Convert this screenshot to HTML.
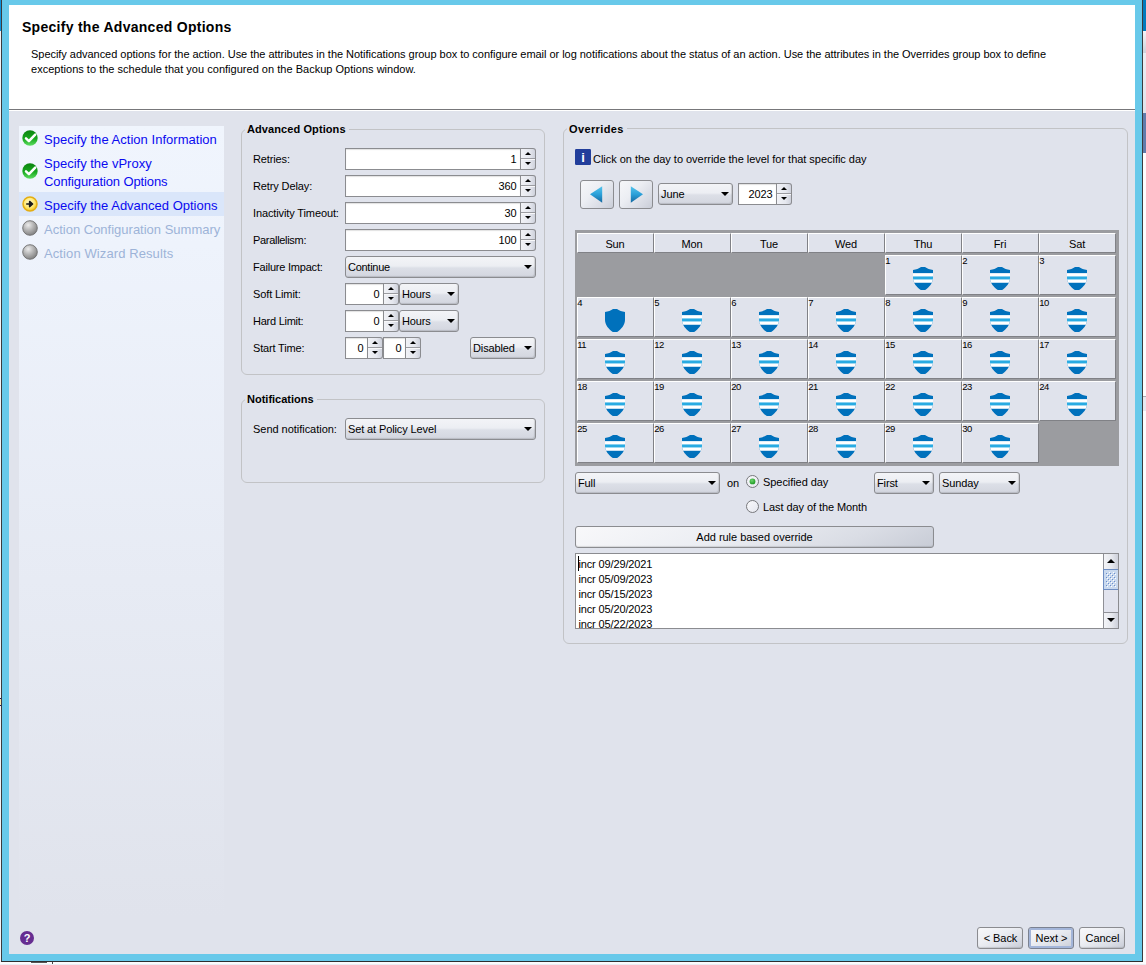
<!DOCTYPE html><html><head><meta charset="utf-8"><title>Specify the Advanced Options</title><style>
html,body{margin:0;padding:0}
body{width:1146px;height:965px;position:relative;overflow:hidden;background:#fff;font-family:"Liberation Sans",Arial,sans-serif;font-size:11px;color:#000;letter-spacing:-0.12px}
.a{position:absolute}
.t{position:absolute;white-space:nowrap;line-height:14px;height:14px}
.grp{position:absolute;border:1px solid #c2c3c6;border-radius:6px;box-sizing:border-box}
.gt{position:absolute;font-weight:bold;font-size:11px;letter-spacing:0.1px;line-height:14px;background:#e0e3ec;white-space:nowrap}
.sp{position:absolute;height:22px;box-sizing:border-box}
.sp .f{position:absolute;left:0;top:0;bottom:0;box-sizing:border-box;border:1px solid #8b8c90;background:#fff;box-shadow:inset 0 1px 1px rgba(0,0,0,.12);text-align:right;font-size:11px;line-height:20px;padding-right:3.5px}
.sp .b{position:absolute;right:0;top:0;bottom:0;width:15px;box-sizing:border-box;border:1px solid #8b8c90;border-left:none;border-radius:0 3px 3px 0;background:linear-gradient(90deg,#f1f2f6 0%,#e6e8ef 60%,#cfd2dc 100%)}
.sp .b:before{content:"";position:absolute;left:0;right:0;top:9px;height:1px;background:#9a9ba0}
.sp .b:after{content:"";position:absolute;left:0;right:0;top:10px;height:1px;background:#f8f8fa}
.up{position:absolute;left:3.5px;top:3px;width:0;height:0;border-left:3.5px solid transparent;border-right:3.5px solid transparent;border-bottom:3.5px solid #000}
.dn{position:absolute;left:3.5px;top:13px;width:0;height:0;border-left:3.5px solid transparent;border-right:3.5px solid transparent;border-top:3.5px solid #000}
.cb{position:absolute;height:22px;box-sizing:border-box;border:1px solid #8b8c90;border-radius:3px;background:linear-gradient(180deg,#f3f4f7 0%,#eceef3 45%,#dcdfe7 55%,#d3d6df 100%);box-shadow:inset -1px -1px 1px rgba(0,0,0,.13);font-size:11px;line-height:20px;padding-left:2px;white-space:nowrap}
.cb i{position:absolute;right:3px;top:8px;width:0;height:0;border-left:4px solid transparent;border-right:4px solid transparent;border-top:4px solid #000}
.btn{position:absolute;box-sizing:border-box;border:1px solid #8b8c90;border-radius:3px;background:linear-gradient(155deg,#f8f8fa 0%,#eceef3 40%,#dadde5 75%,#c8ccd6 100%);box-shadow:inset 0 -1px 1px rgba(0,0,0,.12);font-size:11px;text-align:center;white-space:nowrap}
.nb{background:linear-gradient(135deg,#f6f7f9 0%,#eceef3 40%,#d6d9e2 80%,#c9cdd7 100%);box-shadow:none}
.cell{position:absolute;box-sizing:border-box;width:77px;height:40px;background:#e0e3ec;border-top:1px solid #fff;border-left:1px solid #fff;border-right:1px solid #808186;border-bottom:1px solid #808186}
.cell b{position:absolute;left:-0.8px;top:0px;font-weight:normal;font-size:9.5px;line-height:10px;letter-spacing:-0.45px}
.cell svg{position:absolute;left:27px;top:10.9px}
.hd{position:absolute;box-sizing:border-box;width:77px;height:20px;background:#e0e3ec;border-top:1px solid #fff;border-left:1px solid #fff;border-right:1px solid #808186;border-bottom:1px solid #808186;text-align:center;font-size:11px;line-height:21px;padding-right:1px}
.nav{position:absolute;left:44px;font-size:13px;line-height:18px;letter-spacing:0;color:#0a0af0;white-space:nowrap}
.nav.d{color:#9db3d8}
</style></head><body>
<div class="a" style="left:0;top:0;width:1146px;height:962px;background:#68c9ea"></div>
<div class="a" style="left:0;top:0;width:1px;height:31px;background:#0c93dc"></div>
<div class="a" style="left:0;top:31px;width:1px;height:931px;background:#f4f4f8"></div>
<div class="a" style="left:1px;top:0;width:1px;height:962px;background:#3b3b3d"></div>
<div class="a" style="left:1142px;top:0;width:1px;height:962px;background:#3b3b3d"></div>
<div class="a" style="left:1143px;top:0;width:3px;height:31px;background:#007bbd"></div>
<div class="a" style="left:1143px;top:31px;width:3px;height:931px;background:#fdfdfe"></div>
<div class="a" style="left:1143px;top:31px;width:3px;height:22px;background:linear-gradient(180deg,#f4f4f8,#cfd2db)"></div>
<div class="a" style="left:1143px;top:53px;width:3px;height:60px;background:linear-gradient(180deg,#eceef4,#dfe2ea)"></div>
<div class="a" style="left:1143px;top:113px;width:3px;height:40px;background:#5f7cab"></div>
<div class="a" style="left:1143px;top:396px;width:3px;height:14px;background:#e6e8f0;border-top:1px solid #a9abb3"></div>
<div class="a" style="left:1px;top:961px;width:1142px;height:1px;background:#2e2e30"></div>
<div class="a" style="left:0;top:962px;width:1146px;height:3px;background:#fbfbfd"></div>
<div class="a" style="left:31px;top:962px;width:16px;height:1px;background:#555"></div>
<div class="a" style="left:52px;top:962px;width:1px;height:2px;background:#444"></div>
<div class="a" style="left:0;top:964px;width:1146px;height:1px;background:#ececf2"></div>
<div class="a" style="left:0;top:698px;width:1px;height:1px;background:#1a1a6a"></div>
<div class="a" style="left:0;top:699px;width:1px;height:6px;background:#fde9b0"></div>
<div class="a" style="left:0;top:705px;width:1px;height:1px;background:#1a1a6a"></div>
<div class="a" style="left:9px;top:5px;width:1126px;height:104px;background:#fff"></div>
<div class="a" style="left:9px;top:109px;width:1126px;height:1px;background:#77777a"></div>
<div class="a" style="left:9px;top:110px;width:1126px;height:1px;background:#fff"></div>
<div class="a" style="left:9px;top:111px;width:1126px;height:843px;background:#e0e3ec"></div>
<div class="t" id="title" style="left:22px;top:18px;font-size:14px;font-weight:bold;letter-spacing:0.28px;line-height:18px;height:18px">Specify the Advanced Options</div>
<div class="t" id="d1" style="left:31px;top:47px;letter-spacing:-0.034px">Specify advanced options for the action. Use the attributes in the Notifications group box to configure email or log notifications about the status of an action. Use the attributes in the Overrides group box to define</div>
<div class="t" id="d2" style="left:31px;top:62px;letter-spacing:0.02px">exceptions to the schedule that you configured on the Backup Options window.</div>
<div class="a" style="left:19px;top:126px;width:205px;height:791px;background:linear-gradient(180deg,#f0f5fd 0%,#eef3fc 15%,#e0e3ec 100%)"></div>
<div class="a" style="left:19px;top:192px;width:205px;height:24px;background:#dae6fa"></div>
<svg class="a" style="left:22px;top:130px" width="17" height="16" viewBox="0 0 17 16"><defs><linearGradient id="gg130" x1="0" y1="0" x2="0" y2="1"><stop offset="0" stop-color="#0b8410"/><stop offset="0.55" stop-color="#18a81e"/><stop offset="1" stop-color="#5ede62"/></linearGradient></defs><circle cx="8" cy="8" r="7.7" fill="url(#gg130)"/><path d="M4 8.4 L6.9 11.2 L13.2 4.6" stroke="#fff" stroke-width="2.5" fill="none" stroke-linecap="round" stroke-linejoin="round"/></svg>
<svg class="a" style="left:22px;top:163px" width="17" height="16" viewBox="0 0 17 16"><defs><linearGradient id="gg163" x1="0" y1="0" x2="0" y2="1"><stop offset="0" stop-color="#0b8410"/><stop offset="0.55" stop-color="#18a81e"/><stop offset="1" stop-color="#5ede62"/></linearGradient></defs><circle cx="8" cy="8" r="7.7" fill="url(#gg163)"/><path d="M4 8.4 L6.9 11.2 L13.2 4.6" stroke="#fff" stroke-width="2.5" fill="none" stroke-linecap="round" stroke-linejoin="round"/></svg>
<svg class="a" style="left:22px;top:196px" width="16" height="16" viewBox="0 0 16 16"><defs><radialGradient id="gy196" cx="45%" cy="40%" r="60%"><stop offset="0" stop-color="#fffbd0"/><stop offset="0.6" stop-color="#ffe974"/><stop offset="1" stop-color="#f2c31c"/></radialGradient></defs><circle cx="8" cy="8" r="7" fill="url(#gy196)" stroke="#e3ad14" stroke-width="1.5"/><path d="M4.2 8 H9.5 M7.6 5.4 L10.6 8 L7.6 10.6 Z" stroke="#1a1a1a" stroke-width="1.5" fill="#1a1a1a" stroke-linejoin="round"/></svg>
<svg class="a" style="left:22px;top:220px" width="16" height="16" viewBox="0 0 16 16"><defs><radialGradient id="gr220" cx="38%" cy="30%" r="72%"><stop offset="0" stop-color="#ececec"/><stop offset="0.5" stop-color="#b4b4b4"/><stop offset="1" stop-color="#808080"/></radialGradient></defs><circle cx="8" cy="8" r="7.3" fill="url(#gr220)" stroke="#6e6e6e" stroke-width="0.9"/></svg>
<svg class="a" style="left:22px;top:244px" width="16" height="16" viewBox="0 0 16 16"><defs><radialGradient id="gr244" cx="38%" cy="30%" r="72%"><stop offset="0" stop-color="#ececec"/><stop offset="0.5" stop-color="#b4b4b4"/><stop offset="1" stop-color="#808080"/></radialGradient></defs><circle cx="8" cy="8" r="7.3" fill="url(#gr244)" stroke="#6e6e6e" stroke-width="0.9"/></svg>
<div class="nav" id="n1" style="top:131px;letter-spacing:0.03px">Specify the Action Information</div>
<div class="nav" id="n2" style="top:155px">Specify the vProxy</div>
<div class="nav" id="n3" style="top:173px;letter-spacing:-0.11px">Configuration Options</div>
<div class="nav" id="n4" style="top:197px">Specify the Advanced Options</div>
<div class="nav d" id="n5" style="top:221px">Action Configuration Summary</div>
<div class="nav d" id="n6" style="top:245px;letter-spacing:0.1px">Action Wizard Results</div>
<div class="grp" style="left:241px;top:129px;width:304px;height:246px"></div>
<div class="gt" id="g1" style="left:245px;top:122px;padding:0 3px 0 2px;letter-spacing:0.09px">Advanced Options</div>
<div class="grp" style="left:241px;top:399px;width:304px;height:84px"></div>
<div class="gt" id="g2" style="left:245px;top:392px;padding:0 3px 0 2px;letter-spacing:0.0px">Notifications</div>
<div class="grp" style="left:563px;top:128px;width:565px;height:516px"></div>
<div class="gt" id="g3" style="left:567px;top:122px;padding:0 3px 0 2px;letter-spacing:0.37px">Overrides</div>
<div class="t" id="l0" style="left:253px;top:152px">Retries:</div>
<div class="t" id="l1" style="left:253px;top:179px">Retry Delay:</div>
<div class="t" id="l2" style="left:253px;top:206px">Inactivity Timeout:</div>
<div class="t" id="l3" style="left:253px;top:233px;letter-spacing:-0.31px">Parallelism:</div>
<div class="t" id="l4" style="left:253px;top:260px;letter-spacing:-0.21px">Failure Impact:</div>
<div class="t" id="l5" style="left:253px;top:287px">Soft Limit:</div>
<div class="t" id="l6" style="left:253px;top:314px;letter-spacing:-0.25px">Hard Limit:</div>
<div class="t" id="l7" style="left:253px;top:341px;letter-spacing:-0.17px">Start Time:</div>
<div class="sp" style="left:345px;top:148px;width:191px"><div class="f" style="width:176px">1</div><div class="b" style="width:15px"><span class="up"></span><span class="dn"></span></div></div>
<div class="sp" style="left:345px;top:175px;width:191px"><div class="f" style="width:176px">360</div><div class="b" style="width:15px"><span class="up"></span><span class="dn"></span></div></div>
<div class="sp" style="left:345px;top:202px;width:191px"><div class="f" style="width:176px">30</div><div class="b" style="width:15px"><span class="up"></span><span class="dn"></span></div></div>
<div class="sp" style="left:345px;top:229px;width:191px"><div class="f" style="width:176px">100</div><div class="b" style="width:15px"><span class="up"></span><span class="dn"></span></div></div>
<div class="cb" style="left:345px;top:256px;width:191px;letter-spacing:-0.27px">Continue<i></i></div>
<div class="sp" style="left:345px;top:283px;width:54px"><div class="f" style="width:39px">0</div><div class="b" style="width:15px"><span class="up"></span><span class="dn"></span></div></div>
<div class="cb" style="left:399px;top:283px;width:60px">Hours<i></i></div>
<div class="sp" style="left:345px;top:310px;width:54px"><div class="f" style="width:39px">0</div><div class="b" style="width:15px"><span class="up"></span><span class="dn"></span></div></div>
<div class="cb" style="left:399px;top:310px;width:60px">Hours<i></i></div>
<div class="sp" style="left:345px;top:337px;width:38px"><div class="f" style="width:23px">0</div><div class="b" style="width:15px"><span class="up"></span><span class="dn"></span></div></div>
<div class="sp" style="left:383px;top:337px;width:38px"><div class="f" style="width:23px">0</div><div class="b" style="width:15px"><span class="up"></span><span class="dn"></span></div></div>
<div class="cb" style="left:470px;top:337px;width:66px">Disabled<i></i></div>
<div class="t" id="l8" style="left:253px;top:422px;letter-spacing:-0.03px">Send notification:</div>
<div class="cb" style="left:345px;top:418px;width:191px">Set at Policy Level<i></i></div>
<svg class="a" style="left:575px;top:149px" width="16" height="16" viewBox="0 0 16 16"><rect width="16" height="16" rx="1.2" fill="#223e9b"/><text x="7.9" y="12.6" font-size="13" font-weight="bold" fill="#fff" text-anchor="middle" font-family="Liberation Sans,Arial,sans-serif">i</text></svg>
<div class="t" id="ov" style="left:593px;top:152px;letter-spacing:-0.027px">Click on the day to override the level for that specific day</div>
<svg class="a" width="0" height="0"><defs><linearGradient id="ag" x1="0" y1="0" x2="0" y2="1"><stop offset="0" stop-color="#55c4ec"/><stop offset="0.5" stop-color="#2a9fd8"/><stop offset="1" stop-color="#14679f"/></linearGradient></defs></svg>
<div class="btn nb" style="left:580px;top:180px;width:34px;height:29px"><svg class="a" style="left:9px;top:5px" width="13" height="17" viewBox="0 0 13 17"><path d="M12.2 0.3 L0 8.2 L12.2 16.7 Z" fill="url(#ag)"/></svg></div>
<div class="btn nb" style="left:619px;top:180px;width:34px;height:29px"><svg class="a" style="left:10px;top:5px" width="13" height="17" viewBox="0 0 13 17"><path d="M0.8 0.3 L13 8.2 L0.8 16.7 Z" fill="url(#ag)"/></svg></div>
<div class="cb" style="left:658px;top:183px;width:75px">June<i></i></div>
<div class="sp" style="left:738px;top:183px;width:54px"><div class="f" style="width:39px">2023</div><div class="b" style="width:15px"><span class="up"></span><span class="dn"></span></div></div>
<div class="a" style="left:575px;top:230px;width:544px;height:236px;background:#9b9ca0"></div>
<div class="hd" style="left:577px;top:233px">Sun</div>
<div class="hd" style="left:654px;top:233px">Mon</div>
<div class="hd" style="left:731px;top:233px">Tue</div>
<div class="hd" style="left:808px;top:233px">Wed</div>
<div class="hd" style="left:885px;top:233px">Thu</div>
<div class="hd" style="left:962px;top:233px">Fri</div>
<div class="hd" style="left:1039px;top:233px">Sat</div>
<div class="cell" style="left:885px;top:255px"><b>1</b><svg width="20" height="23.1" viewBox="0 0 20 23" preserveAspectRatio="none"><defs><clipPath id="sc"><path d="M8 0 L12 0 C14 1.4 17 2.6 20 3 L20 11 C20 16 16 20.5 12 23 L8 23 C4 20.5 0 16 0 11 L0 3 C3 2.6 6 1.4 8 0 Z"/></clipPath></defs><g clip-path="url(#sc)"><rect width="20" height="23" fill="#0071bc"/><rect y="6.1" width="20" height="9.6" fill="#fff"/><rect y="9.4" width="20" height="3" fill="#29abe2"/></g></svg></div>
<div class="cell" style="left:962px;top:255px"><b>2</b><svg width="20" height="23.1" viewBox="0 0 20 23" preserveAspectRatio="none"><g clip-path="url(#sc)"><rect width="20" height="23" fill="#0071bc"/><rect y="6.1" width="20" height="9.6" fill="#fff"/><rect y="9.4" width="20" height="3" fill="#29abe2"/></g></svg></div>
<div class="cell" style="left:1039px;top:255px"><b>3</b><svg width="20" height="23.1" viewBox="0 0 20 23" preserveAspectRatio="none"><g clip-path="url(#sc)"><rect width="20" height="23" fill="#0071bc"/><rect y="6.1" width="20" height="9.6" fill="#fff"/><rect y="9.4" width="20" height="3" fill="#29abe2"/></g></svg></div>
<div class="cell" style="left:577px;top:297px"><b>4</b><svg width="20" height="23.1" viewBox="0 0 20 23" preserveAspectRatio="none"><path d="M8 0 L12 0 C14 1.4 17 2.6 20 3 L20 11 C20 16 16 20.5 12 23 L8 23 C4 20.5 0 16 0 11 L0 3 C3 2.6 6 1.4 8 0 Z" fill="#0071bc"/></svg></div>
<div class="cell" style="left:654px;top:297px"><b>5</b><svg width="20" height="23.1" viewBox="0 0 20 23" preserveAspectRatio="none"><g clip-path="url(#sc)"><rect width="20" height="23" fill="#0071bc"/><rect y="6.1" width="20" height="9.6" fill="#fff"/><rect y="9.4" width="20" height="3" fill="#29abe2"/></g></svg></div>
<div class="cell" style="left:731px;top:297px"><b>6</b><svg width="20" height="23.1" viewBox="0 0 20 23" preserveAspectRatio="none"><g clip-path="url(#sc)"><rect width="20" height="23" fill="#0071bc"/><rect y="6.1" width="20" height="9.6" fill="#fff"/><rect y="9.4" width="20" height="3" fill="#29abe2"/></g></svg></div>
<div class="cell" style="left:808px;top:297px"><b>7</b><svg width="20" height="23.1" viewBox="0 0 20 23" preserveAspectRatio="none"><g clip-path="url(#sc)"><rect width="20" height="23" fill="#0071bc"/><rect y="6.1" width="20" height="9.6" fill="#fff"/><rect y="9.4" width="20" height="3" fill="#29abe2"/></g></svg></div>
<div class="cell" style="left:885px;top:297px"><b>8</b><svg width="20" height="23.1" viewBox="0 0 20 23" preserveAspectRatio="none"><g clip-path="url(#sc)"><rect width="20" height="23" fill="#0071bc"/><rect y="6.1" width="20" height="9.6" fill="#fff"/><rect y="9.4" width="20" height="3" fill="#29abe2"/></g></svg></div>
<div class="cell" style="left:962px;top:297px"><b>9</b><svg width="20" height="23.1" viewBox="0 0 20 23" preserveAspectRatio="none"><g clip-path="url(#sc)"><rect width="20" height="23" fill="#0071bc"/><rect y="6.1" width="20" height="9.6" fill="#fff"/><rect y="9.4" width="20" height="3" fill="#29abe2"/></g></svg></div>
<div class="cell" style="left:1039px;top:297px"><b>10</b><svg width="20" height="23.1" viewBox="0 0 20 23" preserveAspectRatio="none"><g clip-path="url(#sc)"><rect width="20" height="23" fill="#0071bc"/><rect y="6.1" width="20" height="9.6" fill="#fff"/><rect y="9.4" width="20" height="3" fill="#29abe2"/></g></svg></div>
<div class="cell" style="left:577px;top:339px"><b>11</b><svg width="20" height="23.1" viewBox="0 0 20 23" preserveAspectRatio="none"><g clip-path="url(#sc)"><rect width="20" height="23" fill="#0071bc"/><rect y="6.1" width="20" height="9.6" fill="#fff"/><rect y="9.4" width="20" height="3" fill="#29abe2"/></g></svg></div>
<div class="cell" style="left:654px;top:339px"><b>12</b><svg width="20" height="23.1" viewBox="0 0 20 23" preserveAspectRatio="none"><g clip-path="url(#sc)"><rect width="20" height="23" fill="#0071bc"/><rect y="6.1" width="20" height="9.6" fill="#fff"/><rect y="9.4" width="20" height="3" fill="#29abe2"/></g></svg></div>
<div class="cell" style="left:731px;top:339px"><b>13</b><svg width="20" height="23.1" viewBox="0 0 20 23" preserveAspectRatio="none"><g clip-path="url(#sc)"><rect width="20" height="23" fill="#0071bc"/><rect y="6.1" width="20" height="9.6" fill="#fff"/><rect y="9.4" width="20" height="3" fill="#29abe2"/></g></svg></div>
<div class="cell" style="left:808px;top:339px"><b>14</b><svg width="20" height="23.1" viewBox="0 0 20 23" preserveAspectRatio="none"><g clip-path="url(#sc)"><rect width="20" height="23" fill="#0071bc"/><rect y="6.1" width="20" height="9.6" fill="#fff"/><rect y="9.4" width="20" height="3" fill="#29abe2"/></g></svg></div>
<div class="cell" style="left:885px;top:339px"><b>15</b><svg width="20" height="23.1" viewBox="0 0 20 23" preserveAspectRatio="none"><g clip-path="url(#sc)"><rect width="20" height="23" fill="#0071bc"/><rect y="6.1" width="20" height="9.6" fill="#fff"/><rect y="9.4" width="20" height="3" fill="#29abe2"/></g></svg></div>
<div class="cell" style="left:962px;top:339px"><b>16</b><svg width="20" height="23.1" viewBox="0 0 20 23" preserveAspectRatio="none"><g clip-path="url(#sc)"><rect width="20" height="23" fill="#0071bc"/><rect y="6.1" width="20" height="9.6" fill="#fff"/><rect y="9.4" width="20" height="3" fill="#29abe2"/></g></svg></div>
<div class="cell" style="left:1039px;top:339px"><b>17</b><svg width="20" height="23.1" viewBox="0 0 20 23" preserveAspectRatio="none"><g clip-path="url(#sc)"><rect width="20" height="23" fill="#0071bc"/><rect y="6.1" width="20" height="9.6" fill="#fff"/><rect y="9.4" width="20" height="3" fill="#29abe2"/></g></svg></div>
<div class="cell" style="left:577px;top:381px"><b>18</b><svg width="20" height="23.1" viewBox="0 0 20 23" preserveAspectRatio="none"><g clip-path="url(#sc)"><rect width="20" height="23" fill="#0071bc"/><rect y="6.1" width="20" height="9.6" fill="#fff"/><rect y="9.4" width="20" height="3" fill="#29abe2"/></g></svg></div>
<div class="cell" style="left:654px;top:381px"><b>19</b><svg width="20" height="23.1" viewBox="0 0 20 23" preserveAspectRatio="none"><g clip-path="url(#sc)"><rect width="20" height="23" fill="#0071bc"/><rect y="6.1" width="20" height="9.6" fill="#fff"/><rect y="9.4" width="20" height="3" fill="#29abe2"/></g></svg></div>
<div class="cell" style="left:731px;top:381px"><b>20</b><svg width="20" height="23.1" viewBox="0 0 20 23" preserveAspectRatio="none"><g clip-path="url(#sc)"><rect width="20" height="23" fill="#0071bc"/><rect y="6.1" width="20" height="9.6" fill="#fff"/><rect y="9.4" width="20" height="3" fill="#29abe2"/></g></svg></div>
<div class="cell" style="left:808px;top:381px"><b>21</b><svg width="20" height="23.1" viewBox="0 0 20 23" preserveAspectRatio="none"><g clip-path="url(#sc)"><rect width="20" height="23" fill="#0071bc"/><rect y="6.1" width="20" height="9.6" fill="#fff"/><rect y="9.4" width="20" height="3" fill="#29abe2"/></g></svg></div>
<div class="cell" style="left:885px;top:381px"><b>22</b><svg width="20" height="23.1" viewBox="0 0 20 23" preserveAspectRatio="none"><g clip-path="url(#sc)"><rect width="20" height="23" fill="#0071bc"/><rect y="6.1" width="20" height="9.6" fill="#fff"/><rect y="9.4" width="20" height="3" fill="#29abe2"/></g></svg></div>
<div class="cell" style="left:962px;top:381px"><b>23</b><svg width="20" height="23.1" viewBox="0 0 20 23" preserveAspectRatio="none"><g clip-path="url(#sc)"><rect width="20" height="23" fill="#0071bc"/><rect y="6.1" width="20" height="9.6" fill="#fff"/><rect y="9.4" width="20" height="3" fill="#29abe2"/></g></svg></div>
<div class="cell" style="left:1039px;top:381px"><b>24</b><svg width="20" height="23.1" viewBox="0 0 20 23" preserveAspectRatio="none"><g clip-path="url(#sc)"><rect width="20" height="23" fill="#0071bc"/><rect y="6.1" width="20" height="9.6" fill="#fff"/><rect y="9.4" width="20" height="3" fill="#29abe2"/></g></svg></div>
<div class="cell" style="left:577px;top:423px"><b>25</b><svg width="20" height="23.1" viewBox="0 0 20 23" preserveAspectRatio="none"><g clip-path="url(#sc)"><rect width="20" height="23" fill="#0071bc"/><rect y="6.1" width="20" height="9.6" fill="#fff"/><rect y="9.4" width="20" height="3" fill="#29abe2"/></g></svg></div>
<div class="cell" style="left:654px;top:423px"><b>26</b><svg width="20" height="23.1" viewBox="0 0 20 23" preserveAspectRatio="none"><g clip-path="url(#sc)"><rect width="20" height="23" fill="#0071bc"/><rect y="6.1" width="20" height="9.6" fill="#fff"/><rect y="9.4" width="20" height="3" fill="#29abe2"/></g></svg></div>
<div class="cell" style="left:731px;top:423px"><b>27</b><svg width="20" height="23.1" viewBox="0 0 20 23" preserveAspectRatio="none"><g clip-path="url(#sc)"><rect width="20" height="23" fill="#0071bc"/><rect y="6.1" width="20" height="9.6" fill="#fff"/><rect y="9.4" width="20" height="3" fill="#29abe2"/></g></svg></div>
<div class="cell" style="left:808px;top:423px"><b>28</b><svg width="20" height="23.1" viewBox="0 0 20 23" preserveAspectRatio="none"><g clip-path="url(#sc)"><rect width="20" height="23" fill="#0071bc"/><rect y="6.1" width="20" height="9.6" fill="#fff"/><rect y="9.4" width="20" height="3" fill="#29abe2"/></g></svg></div>
<div class="cell" style="left:885px;top:423px"><b>29</b><svg width="20" height="23.1" viewBox="0 0 20 23" preserveAspectRatio="none"><g clip-path="url(#sc)"><rect width="20" height="23" fill="#0071bc"/><rect y="6.1" width="20" height="9.6" fill="#fff"/><rect y="9.4" width="20" height="3" fill="#29abe2"/></g></svg></div>
<div class="cell" style="left:962px;top:423px"><b>30</b><svg width="20" height="23.1" viewBox="0 0 20 23" preserveAspectRatio="none"><g clip-path="url(#sc)"><rect width="20" height="23" fill="#0071bc"/><rect y="6.1" width="20" height="9.6" fill="#fff"/><rect y="9.4" width="20" height="3" fill="#29abe2"/></g></svg></div>
<div class="cb" style="left:575px;top:472px;width:145px">Full<i></i></div>
<div class="t" id="on" style="left:727px;top:476px">on</div>
<svg class="a" width="0" height="0"><defs><radialGradient id="rg" cx="40%" cy="35%" r="65%"><stop offset="0" stop-color="#6cd46c"/><stop offset="1" stop-color="#1f9a24"/></radialGradient><linearGradient id="rb" x1="0" y1="0" x2="1" y2="1"><stop offset="0" stop-color="#fafafc"/><stop offset="1" stop-color="#e4e6ee"/></linearGradient></defs></svg>
<svg class="a" style="left:745px;top:474px" width="15" height="15" viewBox="0 0 15 15"><circle cx="7.5" cy="7.5" r="6" fill="url(#rb)" stroke="#77787c" stroke-width="1"/><circle cx="7.5" cy="7.4" r="2.9" fill="url(#rg)"/></svg>
<svg class="a" style="left:745px;top:499px" width="15" height="15" viewBox="0 0 15 15"><circle cx="7.5" cy="7.5" r="6" fill="url(#rb)" stroke="#77787c" stroke-width="1"/></svg>
<div class="t" id="r1" style="left:763px;top:475px;letter-spacing:-0.06px">Specified day</div>
<div class="t" id="r2" style="left:763px;top:500px;letter-spacing:-0.08px">Last day of the Month</div>
<div class="cb" style="left:874px;top:472px;width:60px">First<i></i></div>
<div class="cb" style="left:939px;top:472px;width:81px">Sunday<i></i></div>
<div class="btn" id="addb" style="left:575px;top:526px;width:359px;height:22px;line-height:20px;letter-spacing:-0.02px">Add rule based override</div>
<div class="a" style="left:575px;top:553px;width:544px;height:76px;box-sizing:border-box;border:1px solid #8b8c90;background:#fff;overflow:hidden">
<div class="t" style="left:2.4px;top:3px;letter-spacing:-0.13px">incr 09/29/2021</div>
<div class="t" style="left:2.4px;top:18px;letter-spacing:-0.13px">incr 05/09/2023</div>
<div class="t" style="left:2.4px;top:33px;letter-spacing:-0.13px">incr 05/15/2023</div>
<div class="t" style="left:2.4px;top:48px;letter-spacing:-0.13px">incr 05/20/2023</div>
<div class="t" style="left:2.4px;top:63px;letter-spacing:-0.13px">incr 05/22/2023</div>
<div class="a" style="left:2px;top:2px;width:1px;height:15px;background:#000"></div>
<div class="a" style="left:527px;top:0;width:14px;height:74px;background:#e2e4ee;border-left:1px solid #8f9096"></div>
<div class="a" style="left:528px;top:0;width:14px;height:15px;background:linear-gradient(90deg,#f3f4f7,#e6e8ee 55%,#cdd0da)"><span class="up" style="left:2.7px;top:5.2px;border-left-width:4.3px;border-right-width:4.3px;border-bottom-width:4px"></span></div>
<svg class="a" style="left:527px;top:15px" width="15" height="21" viewBox="0 0 15 21"><defs><pattern id="dp" x="2" y="3" width="4" height="4" patternUnits="userSpaceOnUse"><rect x="0" y="0" width="1" height="1" fill="#fff"/><rect x="1" y="1" width="1" height="1" fill="#6b8fcc"/><rect x="2" y="2" width="1" height="1" fill="#fff"/><rect x="3" y="3" width="1" height="1" fill="#6b8fcc"/></pattern></defs><rect x="0.5" y="0.5" width="15" height="20" fill="#c9d9ee" stroke="#6d8dc2"/><rect x="3" y="3" width="10" height="15" fill="url(#dp)"/></svg>
<div class="a" style="left:528px;top:58px;width:14px;height:16px;background:linear-gradient(90deg,#f3f4f7,#e6e8ee 55%,#cdd0da);border-top:1px solid #8f9096;box-sizing:border-box"><span class="dn" style="left:2.7px;top:5.3px;border-left-width:4.3px;border-right-width:4.3px;border-top-width:4px"></span></div>
</div>
<div class="btn" style="left:977px;top:927px;width:46px;height:22px;line-height:20px;padding-left:1px;letter-spacing:-0.05px">&lt; Back</div>
<div class="btn" style="left:1028px;top:927px;width:46px;height:22px;line-height:20px;padding-left:1px;letter-spacing:-0.05px;border-color:#7b8291;box-shadow:inset 0 0 0 2px #a3b5d9">Next &gt;</div>
<div class="btn" style="left:1079px;top:927px;width:46px;height:22px;line-height:20px;padding-left:1px;letter-spacing:-0.05px">Cancel</div>
<svg class="a" style="left:20px;top:931px" width="14" height="14" viewBox="0 0 14 14"><circle cx="7" cy="7" r="7" fill="#662d91"/><text x="7" y="11" font-size="11" font-weight="bold" fill="#fff" text-anchor="middle" font-family="Liberation Sans,Arial,sans-serif">?</text></svg>
</body></html>
